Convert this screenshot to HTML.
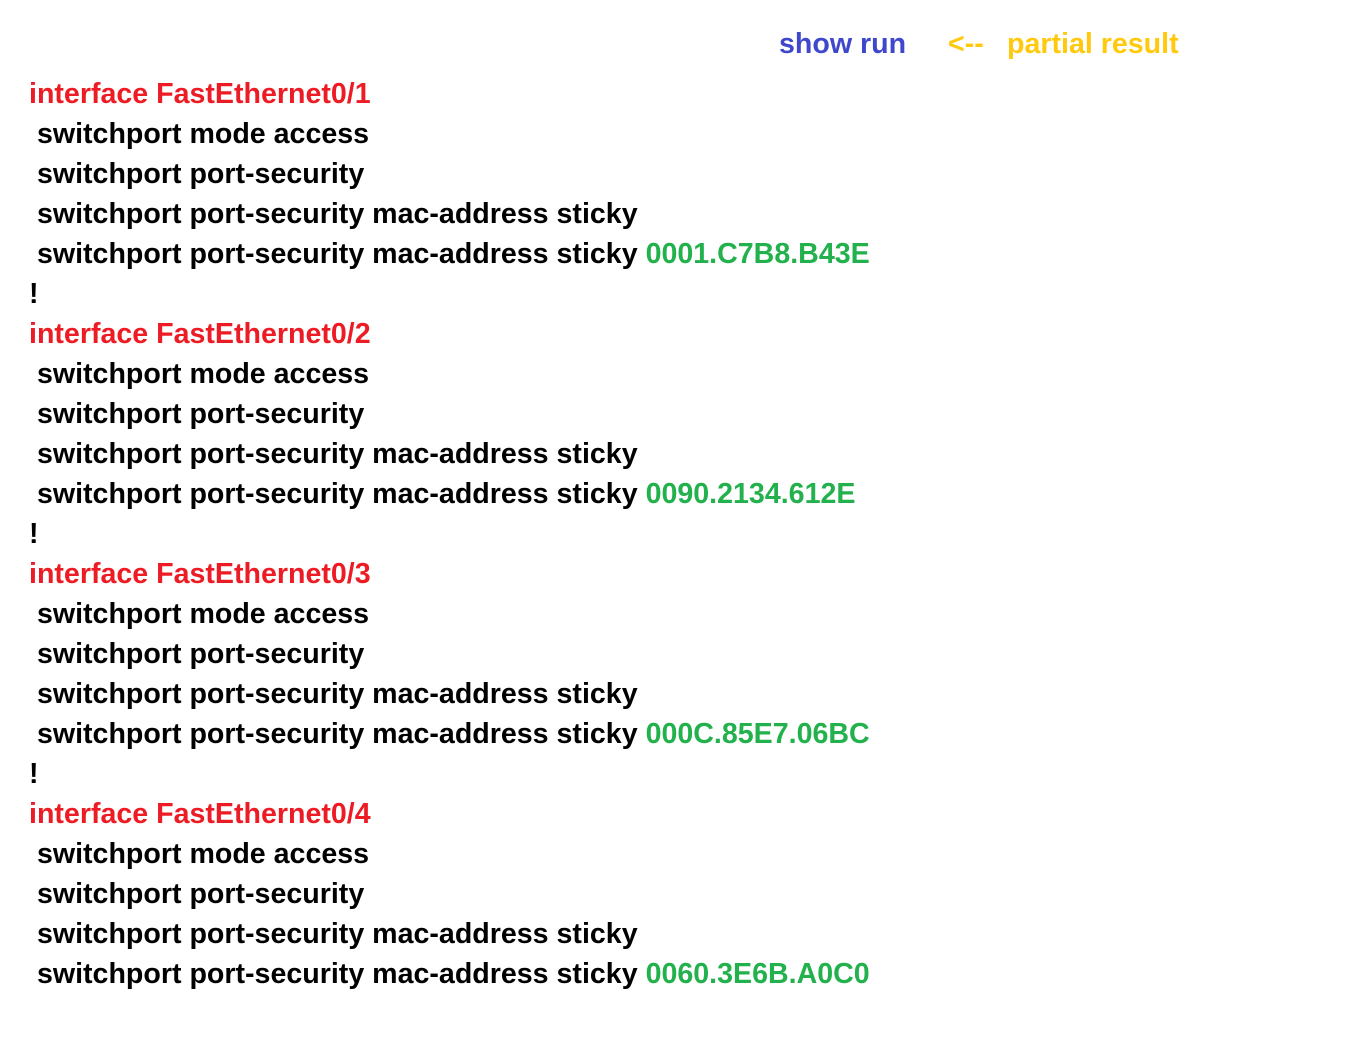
<!DOCTYPE html>
<html><head><meta charset="utf-8"><style>
body{margin:0;background:#fff;width:1346px;height:1040px;overflow:hidden;font-family:"Liberation Sans",sans-serif;font-weight:bold;font-size:28.6px;}
.l{position:absolute;left:29px;height:40px;line-height:40px;white-space:pre;color:#000;margin-top:1px}
.r{color:#ed1c24}.g{color:#22b14c}
#t{position:absolute;top:24px;left:779px;line-height:40px;white-space:pre}
</style></head><body>
<div id="t"><span style="color:#3f48cc">show run</span><span style="position:absolute;left:169px;color:#ffc90e">&lt;--</span><span style="position:absolute;left:228px;color:#ffc90e">partial result</span></div>
<div class="l r" style="top:73px">interface FastEthernet0/1</div>
<div class="l" style="top:113px"> switchport mode access</div>
<div class="l" style="top:153px"> switchport port-security</div>
<div class="l" style="top:193px"> switchport port-security mac-address sticky</div>
<div class="l" style="top:233px"> switchport port-security mac-address sticky <span class="g">0001.C7B8.B43E</span></div>
<div class="l" style="top:273px">!</div>
<div class="l r" style="top:313px">interface FastEthernet0/2</div>
<div class="l" style="top:353px"> switchport mode access</div>
<div class="l" style="top:393px"> switchport port-security</div>
<div class="l" style="top:433px"> switchport port-security mac-address sticky</div>
<div class="l" style="top:473px"> switchport port-security mac-address sticky <span class="g">0090.2134.612E</span></div>
<div class="l" style="top:513px">!</div>
<div class="l r" style="top:553px">interface FastEthernet0/3</div>
<div class="l" style="top:593px"> switchport mode access</div>
<div class="l" style="top:633px"> switchport port-security</div>
<div class="l" style="top:673px"> switchport port-security mac-address sticky</div>
<div class="l" style="top:713px"> switchport port-security mac-address sticky <span class="g">000C.85E7.06BC</span></div>
<div class="l" style="top:753px">!</div>
<div class="l r" style="top:793px">interface FastEthernet0/4</div>
<div class="l" style="top:833px"> switchport mode access</div>
<div class="l" style="top:873px"> switchport port-security</div>
<div class="l" style="top:913px"> switchport port-security mac-address sticky</div>
<div class="l" style="top:953px"> switchport port-security mac-address sticky <span class="g">0060.3E6B.A0C0</span></div>
</body></html>
